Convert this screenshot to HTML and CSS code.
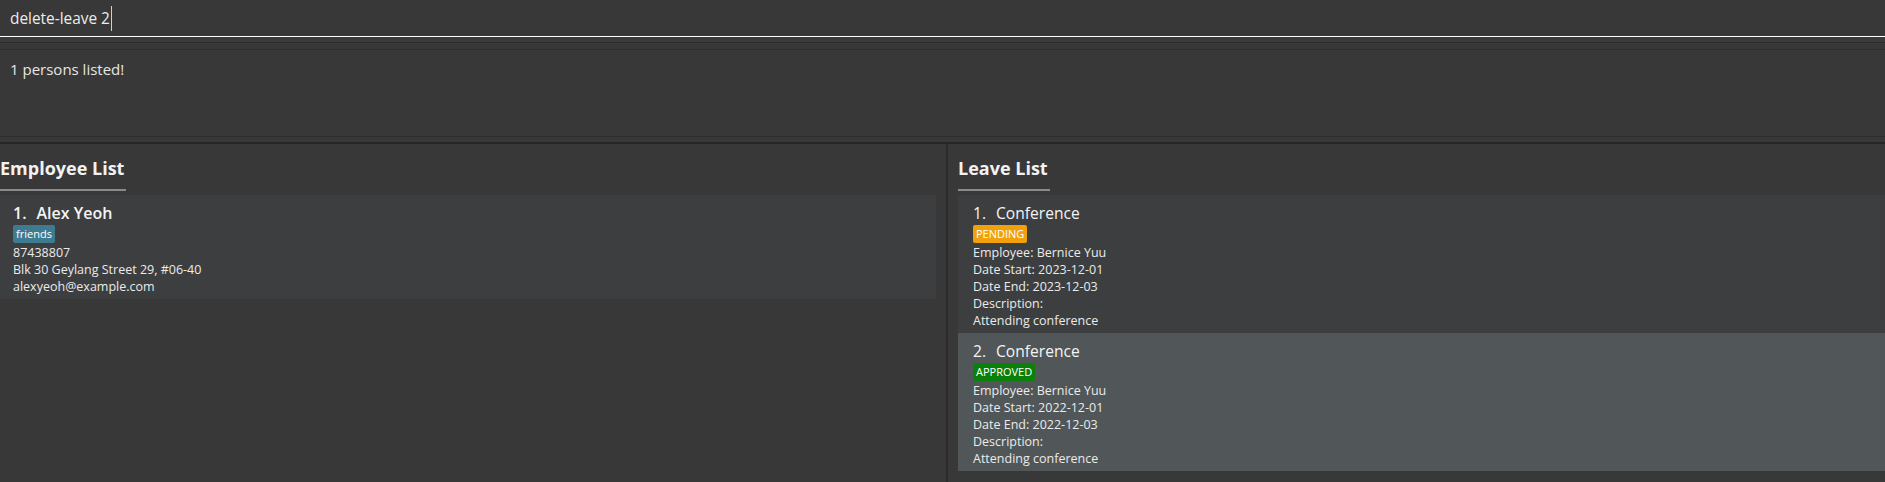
FILE: index.html
```html
<!DOCTYPE html>
<html lang="en">
<head>
<meta charset="utf-8">
<title>Leave Manager</title>
<link rel="stylesheet" href="styles.css">
</head>
<body>
<div class="app">
  <div class="command">
    <span class="command-text">delete-leave 2</span><span class="caret"></span>
  </div>
  <div class="command-rule"></div>
  <div class="sep-a"></div>
  <div class="result">
    <p class="result-text">1 persons listed!</p>
  </div>
  <div class="sep-b"></div>
  <div class="panes">
    <section class="pane pane-left">
      <h2 class="pane-title">Employee List</h2>
      <div class="list">
        <article class="card card-emp">
          <div class="card-title emp-name"><span class="idx">1.</span>Alex Yeoh</div>
          <div class="tags"><span class="badge badge-tag">friends</span></div>
          <div class="line">87438807</div>
          <div class="line">Blk 30 Geylang Street 29, #06-40</div>
          <div class="line">alexyeoh@example.com</div>
        </article>
      </div>
    </section>
    <div class="divider"></div>
    <section class="pane pane-right">
      <h2 class="pane-title">Leave List</h2>
      <div class="list">
        <article class="card card-leave">
          <div class="card-title"><span class="idx">1.</span>Conference</div>
          <div class="tags"><span class="badge badge-pending">PENDING</span></div>
          <div class="line">Employee: Bernice Yuu</div>
          <div class="line">Date Start: 2023-12-01</div>
          <div class="line">Date End: 2023-12-03</div>
          <div class="line">Description:</div>
          <div class="line">Attending conference</div>
        </article>
        <article class="card card-leave card-selected">
          <div class="card-title"><span class="idx">2.</span>Conference</div>
          <div class="tags"><span class="badge badge-approved">APPROVED</span></div>
          <div class="line">Employee: Bernice Yuu</div>
          <div class="line">Date Start: 2022-12-01</div>
          <div class="line">Date End: 2022-12-03</div>
          <div class="line">Description:</div>
          <div class="line">Attending conference</div>
        </article>
      </div>
    </section>
  </div>
</div>
</body>
</html>
```

FILE: styles.css
```css
* { box-sizing: border-box; }
html, body {
  margin: 0;
  padding: 0;
  background: #383838;
}
body {
  width: 1885px;
  height: 482px;
  overflow: hidden;
  font-family: "Open Sans", "Noto Sans", sans-serif;
  color: #ececec;
}
.app {
  display: flex;
  flex-direction: column;
  height: 482px;
}
.command {
  height: 36px;
  padding-left: 10px;
  display: flex;
  align-items: center;
  font-size: 15.4px;
  color: #ececec;
}
.caret {
  display: inline-block;
  width: 1px;
  height: 25px;
  background: #d0d0d0;
  margin-left: 1px;
}
.command-rule {
  height: 1px;
  background: #ffffff;
}
.sep-a {
  height: 13px;
  background: #383838;
  border-top: 5px solid #3b3b3b;
  border-bottom: 1px solid #2e2e2e;
  box-shadow: inset 0 1px 0 #2b2b2b;
}
.result {
  height: 86px;
  padding: 10px 10px 0;
}
.result-text {
  margin: 0;
  font-size: 15px;
  line-height: 19px;
  color: #e6e6e6;
}
.sep-b {
  height: 8px;
  border-top: 1px solid #2e2e2e;
  border-bottom: 2px solid #262626;
}
.panes {
  flex: 1;
  display: flex;
  min-height: 0;
}
.pane {
  display: flex;
  flex-direction: column;
  align-items: flex-start;
}
.pane-left {
  width: 946px;
  padding-right: 10px;
}
.divider {
  width: 2px;
  background: #2b2b2b;
}
.pane-right {
  flex: 1;
  padding-left: 10px;
}
.pane-title {
  margin: 11px 0 0;
  font-size: 18px;
  font-weight: 700;
  line-height: 26px;
  color: #f2f2f2;
  padding-bottom: 8px;
  padding-right: 2px;
  border-bottom: 2px solid #8a8a8a;
}
.list {
  align-self: stretch;
  margin-top: 4px;
  display: flex;
  flex-direction: column;
}
.card {
  background: #3c3e3f;
  padding: 7px 13px 5px;
}
.card-leave {
  padding-left: 15px;
}
.card-selected {
  background: #515658;
}
.card-title {
  font-size: 16px;
  line-height: 22px;
  color: #f4f4f4;
}
.card-leave .card-title {
  font-size: 15.6px;
}
.emp-name {
  font-weight: 600;
}
.idx {
  margin-right: 10px;
}
.tags {
  display: flex;
  margin-top: 1px;
  height: 18px;
  margin-bottom: 1px;
}
.badge {
  display: inline-block;
  height: 18px;
  line-height: 18px;
  font-size: 11px;
  padding: 0 3px;
  border-radius: 2px;
  color: #ffffff;
}
.badge-tag {
  background: #3e7b91;
}
.badge-pending {
  background: #f0a10c;
}
.badge-approved {
  background: #0a800a;
}
.line {
  font-size: 12.5px;
  line-height: 17px;
  color: #ebebeb;
}
.card-emp .line:last-child,
.card-leave .line:last-child {
  margin-bottom: -1px;
}
```
